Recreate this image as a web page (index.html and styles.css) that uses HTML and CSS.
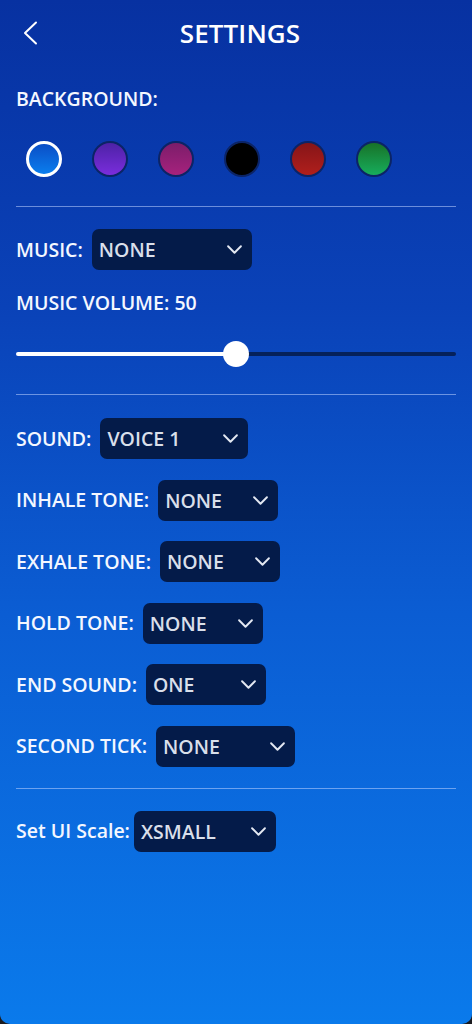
FILE: index.html
```html
<!DOCTYPE html>
<html lang="en">
<head>
<meta charset="utf-8">
<title>Settings</title>
<link rel="stylesheet" href="styles.css">
</head>
<body>
<div class="screen">
  <header class="header">
    <button class="back" aria-label="Back">
      <svg width="16" height="24" viewBox="0 0 16 24"><path d="M13 1.5 L2 12 L13 22.5" fill="none" stroke="#ffffff" stroke-width="2" stroke-linecap="round" stroke-linejoin="round"/></svg>
    </button>
    <h1 class="title">SETTINGS</h1>
    <span></span>
  </header>

  <div class="label section-label">BACKGROUND:</div>
  <div class="swatches">
    <span class="swatch sw-blue selected"></span>
    <span class="swatch sw-purple"></span>
    <span class="swatch sw-magenta"></span>
    <span class="swatch sw-black"></span>
    <span class="swatch sw-red"></span>
    <span class="swatch sw-green"></span>
  </div>

  <hr class="divider d1">

  <div class="row music-row">
    <span class="label">MUSIC:</span>
    <div class="select w160"><span>NONE</span><svg class="chev" viewBox="0 0 14 8"><path d="M1 1 L7 7 L13 1" /></svg></div>
  </div>

  <div class="label volume-label">MUSIC VOLUME: 50</div>
  <div class="slider">
    <div class="track-fill"></div>
    <div class="thumb"></div>
    <div class="track-rest"></div>
  </div>

  <hr class="divider d2">

  <div class="rows">
    <div class="row">
      <span class="label">SOUND:</span>
      <div class="select w148"><span>VOICE 1</span><svg class="chev" viewBox="0 0 14 8"><path d="M1 1 L7 7 L13 1" /></svg></div>
    </div>
    <div class="row">
      <span class="label">INHALE TONE:</span>
      <div class="select w120"><span>NONE</span><svg class="chev" viewBox="0 0 14 8"><path d="M1 1 L7 7 L13 1" /></svg></div>
    </div>
    <div class="row">
      <span class="label">EXHALE TONE:</span>
      <div class="select w120"><span>NONE</span><svg class="chev" viewBox="0 0 14 8"><path d="M1 1 L7 7 L13 1" /></svg></div>
    </div>
    <div class="row">
      <span class="label">HOLD TONE:</span>
      <div class="select w120"><span>NONE</span><svg class="chev" viewBox="0 0 14 8"><path d="M1 1 L7 7 L13 1" /></svg></div>
    </div>
    <div class="row">
      <span class="label">END SOUND:</span>
      <div class="select w120"><span>ONE</span><svg class="chev" viewBox="0 0 14 8"><path d="M1 1 L7 7 L13 1" /></svg></div>
    </div>
    <div class="row">
      <span class="label">SECOND TICK:</span>
      <div class="select w139"><span>NONE</span><svg class="chev" viewBox="0 0 14 8"><path d="M1 1 L7 7 L13 1" /></svg></div>
    </div>
  </div>

  <hr class="divider d3">

  <div class="row scale-row">
    <span class="label">Set UI Scale:</span>
    <div class="select w142"><span>XSMALL</span><svg class="chev" viewBox="0 0 14 8"><path d="M1 1 L7 7 L13 1" /></svg></div>
  </div>
</div>
</body>
</html>
```

FILE: styles.css
```css
* { box-sizing: border-box; }

html, body {
  margin: 0;
  padding: 0;
  background: #1b1b1f;
}

body {
  font-family: "Open Sans", "Noto Sans", sans-serif;
  color: #ffffff;
}

.screen {
  width: 472px;
  height: 1024px;
  padding: 0 16px;
  display: flex;
  flex-direction: column;
  background: linear-gradient(180deg, #0731a1 0%, #0a42b8 30%, #0b5dd3 60%, #0a7aeb 100%);
  border-radius: 0 0 10px 10px;
  overflow: hidden;
}

.header {
  height: 65px;
  display: grid;
  grid-template-columns: 1fr auto 1fr;
  align-items: center;
  margin: 0 -16px;
  padding-left: 8px;
}

.back {
  justify-self: start;
  background: none;
  border: 0;
  padding: 0;
  margin-left: 15px;
  width: 16px;
  height: 24px;
  display: flex;
  cursor: pointer;
}

.title {
  margin: 0;
  font-size: 26px;
  font-weight: 600;
  letter-spacing: 0.1px;
  line-height: 32px;
  color: #ffffff;
}

.label {
  font-size: 19.5px;
  font-weight: 600;
  line-height: 26px;
  color: #f4f7ff;
  white-space: nowrap;
}

.section-label {
  margin-top: 21px;
}

.swatches {
  display: flex;
  gap: 30px;
  padding-left: 10px;
  margin-top: 29px;
}

.swatch {
  width: 36px;
  height: 36px;
  border-radius: 50%;
  border: 2px solid #0b2466;
}

.swatch.selected {
  border: 3px solid #ffffff;
}

.sw-blue { background: linear-gradient(180deg, #0b4ec6, #0a7eee); }
.sw-purple { background: linear-gradient(180deg, #4d22a6, #7a2ddc); }
.sw-magenta { background: linear-gradient(180deg, #7c1d6a, #a6227d); }
.sw-black { background: #000000; }
.sw-red { background: linear-gradient(180deg, #861518, #b01f1c); }
.sw-green { background: linear-gradient(180deg, #187228, #17ad5c); }

.divider {
  border: 0;
  height: 1px;
  margin: 0;
  background: rgba(190, 210, 255, 0.55);
}

.d1 { margin-top: 29px; }
.d2 { margin-top: 27px; }
.d3 { margin-top: 21px; }

.row {
  display: flex;
  align-items: center;
  gap: 9px;
}

.music-row { margin-top: 22px; }

.scale-row {
  margin-top: 22px;
  gap: 4px;
}

.rows {
  display: flex;
  flex-direction: column;
  gap: 20.6px;
  margin-top: 23px;
}

.select {
  height: 41px;
  border-radius: 7px;
  background: #041b49;
  display: flex;
  align-items: center;
  justify-content: space-between;
  padding: 0 10px 0 7px;
  font-size: 19.5px;
  font-weight: 600;
  color: #d9dfea;
}

.w160 { width: 160px; }
.w148 { width: 148px; }
.w120 { width: 120px; }
.w139 { width: 139px; }
.w142 { width: 142px; }

.chev {
  width: 15px;
  height: 9px;
  fill: none;
  stroke: #e3e8f2;
  stroke-width: 1.8;
  stroke-linecap: round;
  stroke-linejoin: round;
  overflow: visible;
}

.volume-label {
  margin-top: 20px;
}

.slider {
  margin-top: 25px;
  height: 26px;
  display: flex;
  align-items: center;
}

.track-fill {
  flex: 1;
  height: 4px;
  background: #ffffff;
  border-radius: 2px 0 0 2px;
  margin-right: -13px;
}

.track-rest {
  flex: 1;
  height: 4px;
  background: #05215a;
  border-radius: 0 2px 2px 0;
  margin-left: -13px;
}

.thumb {
  width: 26px;
  height: 26px;
  border-radius: 50%;
  background: #ffffff;
  position: relative;
  z-index: 1;
  flex: none;
}
```
